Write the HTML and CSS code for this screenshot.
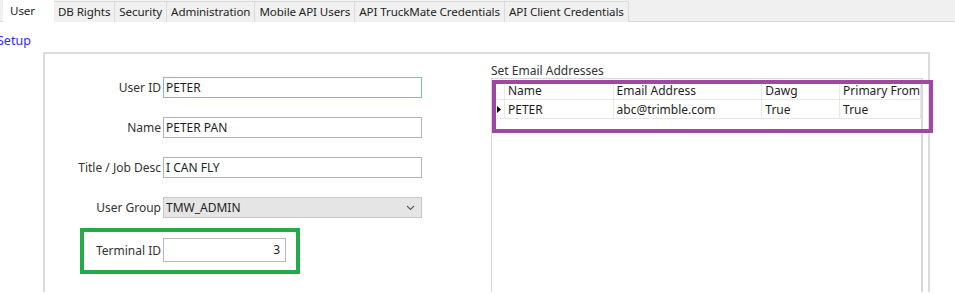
FILE: index.html
```html
<!DOCTYPE html>
<html lang="en">
<head>
    <meta charset="UTF-8">
    <title>User Setup</title>
    <link rel="stylesheet" href="styles.css">
</head>
<body>
    <div class="tabs">
        <div class="tab active">User</div>
        <div class="tab">DB Rights</div>
        <div class="tab">Security</div>
        <div class="tab">Administration</div>
        <div class="tab">Mobile API Users</div>
        <div class="tab">API TruckMate Credentials</div>
        <div class="tab">API Client Credentials</div>
    </div>

    <div class="setup">Setup</div>

    <div class="panel">
        <div class="form">
            <div class="row">
                <label>User ID</label>
                <div class="field focus">PETER</div>
            </div>
            <div class="row">
                <label>Name</label>
                <div class="field">PETER PAN</div>
            </div>
            <div class="row">
                <label>Title / Job Desc</label>
                <div class="field">I CAN FLY</div>
            </div>
            <div class="row">
                <label>User Group</label>
                <div class="field select">
                    TMW_ADMIN
                    <svg width="9" height="6" viewBox="0 0 9 6"><path d="M1 1 L4.5 4.5 L8 1" fill="none" stroke="#606060" stroke-width="1.2"/></svg>
                </div>
            </div>
            <div class="terminal">
                <label>Terminal ID</label>
                <div class="field num">3</div>
            </div>
        </div>

        <div class="emails">
            <div class="caption">Set Email Addresses</div>
            <div class="grid">
                <table>
                    <tr class="head">
                        <td class="rh"></td>
                        <td class="c-name">Name</td>
                        <td class="c-mail">Email Address</td>
                        <td class="c-dawg">Dawg</td>
                        <td class="c-prim">Primary From</td>
                    </tr>
                    <tr>
                        <td class="rh"><svg class="arrow" width="4" height="7" viewBox="0 0 4 7"><path d="M0 0 L4 3.5 L0 7 Z" fill="#000"/></svg></td>
                        <td>PETER</td>
                        <td>abc@trimble.com</td>
                        <td>True</td>
                        <td>True</td>
                    </tr>
                </table>
                <div class="highlight"></div>
            </div>
        </div>
    </div>
</body>
</html>
```

FILE: styles.css
```css
body { margin: 0; font-family: "Noto Sans", "Open Sans", sans-serif; font-size: 12px; color: #1e1e1e; background: #fff; overflow: hidden; }

.tabs { display: flex; height: 22px; padding-left: 3px; background: #f0f0f0; border-bottom: 1px solid #dadada; box-sizing: border-box; font-size: 11.6px; }
.tab { height: 20px; margin-top: 1px; padding: 0 4px; line-height: 19px; border: 1px solid #dadada; border-bottom: none; border-left: none; background: #f0f0f0; white-space: nowrap; letter-spacing: -0.1px; }
.tab.active { width: 51px; height: 22px; margin-top: 0; padding: 0 0 0 7px; box-sizing: border-box; background: #fff; border: none; line-height: 21px; }

.setup { margin: 10px 0 0 -3px; height: 20px; color: #2b2bf0; font-size: 12.5px; }

.panel { display: flex; height: 240px; margin-left: 43px; width: 887px; border-top: 2px solid #dcdcdc; border-left: 2px solid #dcdcdc; border-right: 2px solid #dcdcdc; box-sizing: border-box; }

.form { width: 446px; padding-top: 23px; }
.row { display: flex; align-items: center; height: 21px; margin-bottom: 19px; }
.row label { width: 116px; padding-right: 2px; text-align: right; color: #333; }
.field { width: 259px; height: 21px; box-sizing: border-box; border: 1px solid #b4b4b4; padding-left: 2px; line-height: 19px; background: #fff; }
.field.focus { border-color: #7eb4ea; }
.field.select { display: flex; justify-content: space-between; align-items: center; background: #e5e5e5; border-color: #c8c8c8; padding-right: 6px; }

.terminal { display: inline-flex; align-items: center; margin: -9px 0 0 35px; padding: 6px 10px 8px 0; border: 4px solid #22ac48; }
.terminal label { width: 77px; padding-right: 2px; text-align: right; color: #333; }
.field.num { width: 123px; height: 24px; line-height: 22px; text-align: right; padding-right: 5px; border-color: #b8b8b8; }

.emails { flex: 1; display: flex; flex-direction: column; padding-top: 10px; }
.caption { height: 14px; line-height: 14px; color: #333; }
.grid { position: relative; flex: 1; margin-right: 5px; border: 1px solid #d8d8d8; border-right-width: 2px; border-bottom: none; }
.grid table { border-collapse: collapse; margin: 3px 0 0 5px; }
.grid td { height: 18px; padding: 0 0 0 3px; border-right: 1px solid #e8e8e8; border-bottom: 1px solid #e8e8e8; white-space: nowrap; }
.grid .head td { height: 17px; }
.grid td.rh { width: 7px; padding: 0; position: relative; }
.c-name { width: 105px; }
.c-mail { width: 145px; }
.c-dawg { width: 74px; }
.c-prim { width: 74px; }
.arrow { position: absolute; left: 0; top: 6px; }

.highlight { position: absolute; left: 0; top: 1px; width: 441px; height: 53px; box-sizing: border-box; border: 4px solid #a146a5; }
```
